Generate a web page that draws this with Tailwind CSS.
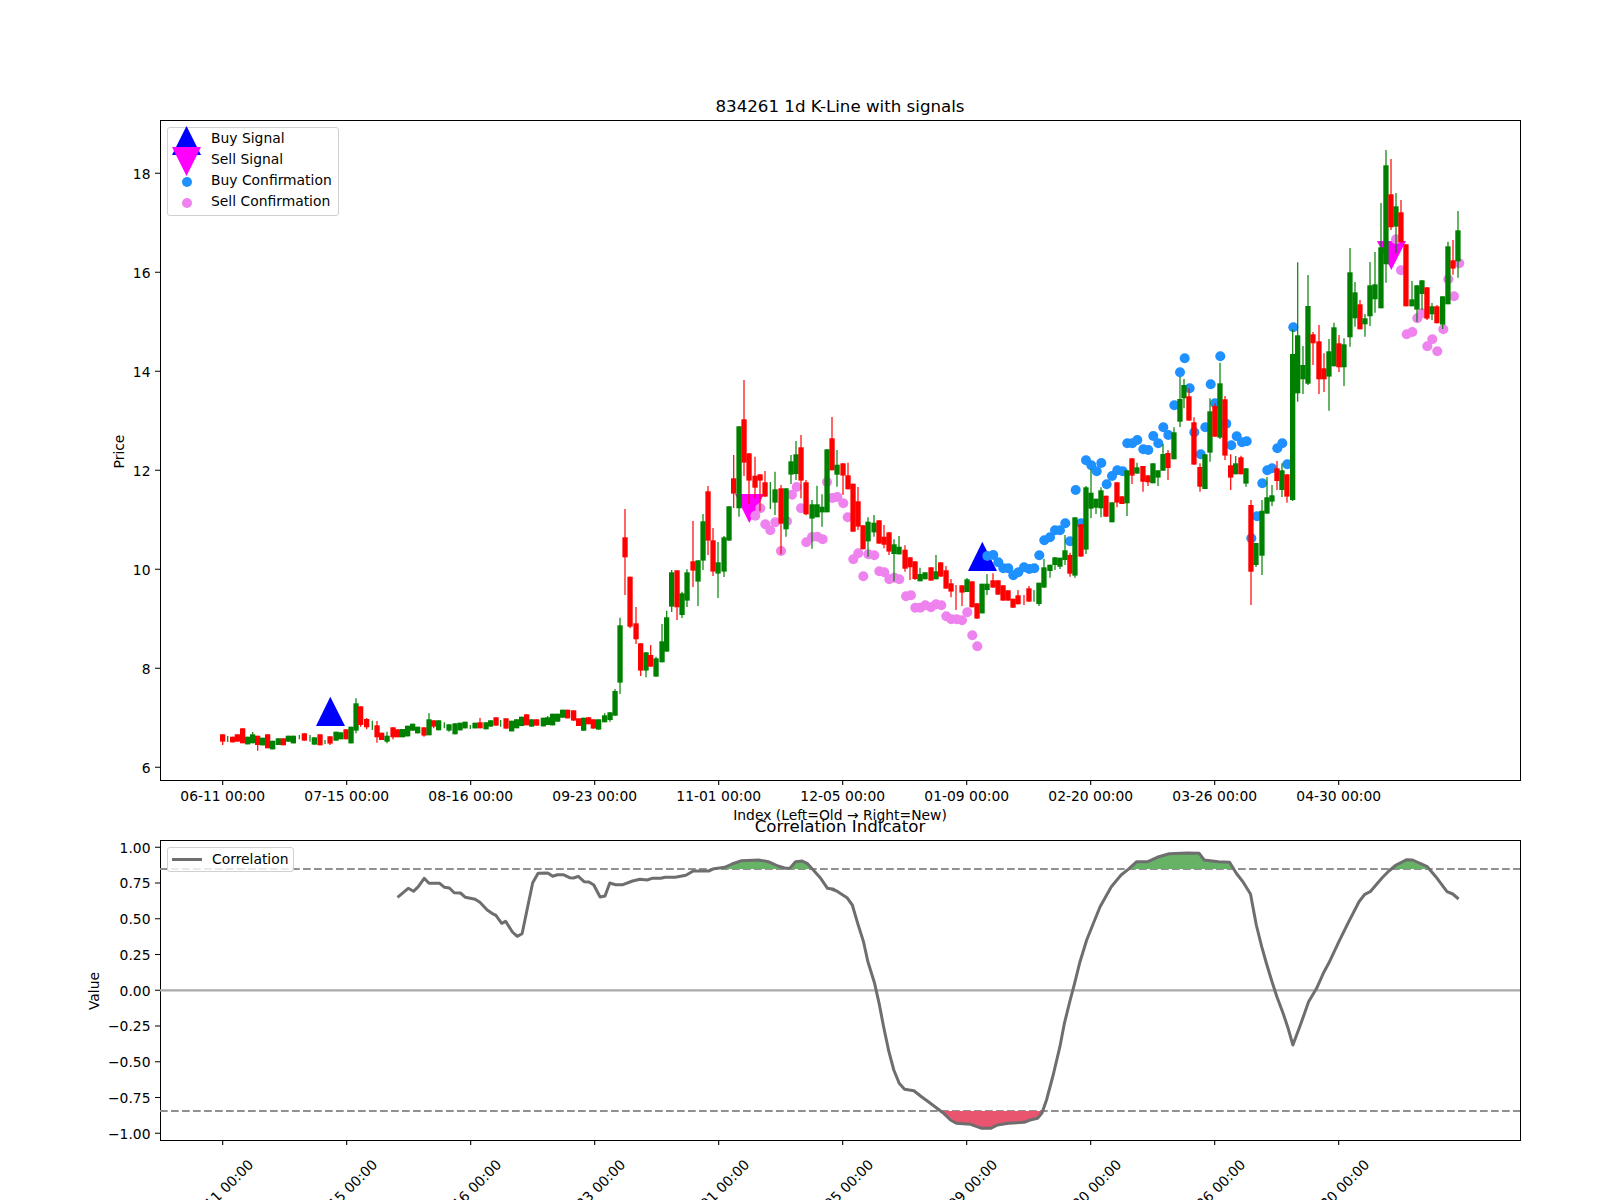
<!DOCTYPE html>
<html>
<head>
<meta charset="utf-8">
<script src="https://cdn.jsdelivr.net/npm/@tailwindcss/browser@4"></script>
</head>
<body class="bg-white">
<div class="relative w-[1600px] h-[1200px] overflow-hidden bg-white text-black font-['DejaVu_Sans',sans-serif] text-[13.89px] flex flex-col gap-[59px] pt-[120px] pl-[160px]">

  <section class="relative w-[1361px] h-[661px] border border-black">
    <svg class="absolute left-[-1px] top-[-1px] w-[1360px] h-[660px] overflow-visible" viewBox="160 120 1360 660" fill="black">
      <text x="840" y="112" text-anchor="middle" class="text-[16.67px]">834261 1d K-Line with signals</text>
      <g id="price-layer"></g>
      <path stroke="black" stroke-width="1.1" fill="none" d="M155 173.3h5M155 272.3h5M155 371.3h5M155 470.3h5M155 569.3h5M155 668.3h5M155 767.3h5M222.7 780v5M346.7 780v5M470.7 780v5M594.7 780v5M718.7 780v5M842.7 780v5M966.7 780v5M1090.7 780v5M1214.7 780v5M1338.7 780v5"/>
      <g text-anchor="end">
        <text x="150.5" y="178.5">18</text><text x="150.5" y="277.5">16</text><text x="150.5" y="376.5">14</text><text x="150.5" y="475.5">12</text><text x="150.5" y="574.5">10</text><text x="150.5" y="673.5">8</text><text x="150.5" y="772.5">6</text>
      </g>
      <g text-anchor="middle">
        <text x="222.7" y="801">06-11 00:00</text><text x="346.7" y="801">07-15 00:00</text><text x="470.7" y="801">08-16 00:00</text><text x="594.7" y="801">09-23 00:00</text><text x="718.7" y="801">11-01 00:00</text><text x="842.7" y="801">12-05 00:00</text><text x="966.7" y="801">01-09 00:00</text><text x="1090.7" y="801">02-20 00:00</text><text x="1214.7" y="801">03-26 00:00</text><text x="1338.7" y="801">04-30 00:00</text>
        <text x="840" y="820">Index (Left=Old → Right=New)</text>
        <text transform="rotate(-90 124 451.5)" x="124" y="451.5">Price</text>
      </g>
    </svg>
    <div class="absolute left-[6px] top-[6px] w-[172px] h-[89px] rounded-[3px] border border-[#d0d0d0] bg-white/80 flex flex-col">
      <div class="relative h-[21px] flex items-center pl-[43px]">
        <svg class="absolute left-[4px] top-[-2px] w-[29px] h-[29px] overflow-visible" viewBox="0 0 29 29"><polygon points="14.5,0 29,29 0,29" fill="#0000ff"/></svg>
        <span class="relative">Buy Signal</span>
      </div>
      <div class="relative h-[21px] flex items-center pl-[43px]">
        <svg class="absolute left-[4px] top-[-2px] w-[29px] h-[29px] overflow-visible" viewBox="0 0 29 29"><polygon points="0,0 29,0 14.5,29" fill="#ff00ff"/></svg>
        <span class="relative">Sell Signal</span>
      </div>
      <div class="relative h-[21px] flex items-center pl-[43px]">
        <span class="absolute left-[14px] top-[7px] w-[10px] h-[10px] rounded-full bg-[#1e90ff]"></span>
        <span class="relative">Buy Confirmation</span>
      </div>
      <div class="relative h-[21px] flex items-center pl-[43px]">
        <span class="absolute left-[14px] top-[7px] w-[10px] h-[10px] rounded-full bg-[#ee82ee]"></span>
        <span class="relative">Sell Confirmation</span>
      </div>
    </div>
  </section>

  <section class="relative w-[1361px] h-[301px] border border-black">
    <svg class="absolute left-[-1px] top-[-1px] w-[1360px] h-[300px] overflow-visible" viewBox="160 840 1360 300" fill="black">
      <defs>
        <clipPath id="above"><rect x="160" y="840" width="1360" height="29"/></clipPath>
        <clipPath id="below"><rect x="160" y="1111" width="1360" height="29"/></clipPath>
      </defs>
      <text x="840" y="832" text-anchor="middle" class="text-[16.67px]">Correlation Indicator</text>
      <path d="M160 990.3H1520" stroke="#aaaaaa" stroke-width="2.2" fill="none"/>
      <path d="M160 869H1520M160 1111H1520" stroke="#909090" stroke-width="2.2" stroke-dasharray="7.7 3.3" fill="none"/>
      <polygon id="fill-up" fill="#66b366" clip-path="url(#above)"/>
      <polygon id="fill-down" fill="#e9546f" clip-path="url(#below)"/>
      <polyline id="corr" fill="none" stroke="#6e6e6e" stroke-width="3" stroke-linejoin="round"/>
      <path stroke="black" stroke-width="1.1" fill="none" d="M155 847.3h5M155 883h5M155 918.8h5M155 954.5h5M155 990.3h5M155 1026h5M155 1061.8h5M155 1097.5h5M155 1133.3h5M222.7 1140v5M346.7 1140v5M470.7 1140v5M594.7 1140v5M718.7 1140v5M842.7 1140v5M966.7 1140v5M1090.7 1140v5M1214.7 1140v5M1338.7 1140v5"/>
      <g text-anchor="end">
        <text x="150.5" y="852.5">1.00</text><text x="150.5" y="888.2">0.75</text><text x="150.5" y="924">0.50</text><text x="150.5" y="959.7">0.25</text><text x="150.5" y="995.5">0.00</text><text x="150.5" y="1031.2">−0.25</text><text x="150.5" y="1067">−0.50</text><text x="150.5" y="1102.7">−0.75</text><text x="150.5" y="1138.5">−1.00</text>
      </g>
      <g text-anchor="middle">
        <text transform="rotate(-90 99 991)" x="99" y="991">Value</text>
        <text transform="rotate(-45 220.7 1192)" x="220.7" y="1197">06-11 00:00</text>
        <text transform="rotate(-45 344.7 1192)" x="344.7" y="1197">07-15 00:00</text>
        <text transform="rotate(-45 468.7 1192)" x="468.7" y="1197">08-16 00:00</text>
        <text transform="rotate(-45 592.7 1192)" x="592.7" y="1197">09-23 00:00</text>
        <text transform="rotate(-45 716.7 1192)" x="716.7" y="1197">11-01 00:00</text>
        <text transform="rotate(-45 840.7 1192)" x="840.7" y="1197">12-05 00:00</text>
        <text transform="rotate(-45 964.7 1192)" x="964.7" y="1197">01-09 00:00</text>
        <text transform="rotate(-45 1088.7 1192)" x="1088.7" y="1197">02-20 00:00</text>
        <text transform="rotate(-45 1212.7 1192)" x="1212.7" y="1197">03-26 00:00</text>
        <text transform="rotate(-45 1336.7 1192)" x="1336.7" y="1197">04-30 00:00</text>
      </g>
    </svg>
    <div class="absolute left-[6px] top-[6px] w-[127px] h-[25px] rounded-[3px] border border-[#d0d0d0] bg-white/80 flex items-center pl-[44px]">
      <span class="absolute left-[4px] top-[10px] w-[30px] h-[3px] bg-[#6e6e6e]"></span>
      <span class="relative">Correlation</span>
    </div>
  </section>
</div>

<script>
// Candles: [x, colour (0 green, 1 red), body top, body bottom, wick top, wick bottom] in crop coordinates
var G=0,R=1;
var segs=[
{ox:150,oy:480,s:3,d:[
[218,R,763,785,0,795],[233,G,0,0,768,786],[248,R,770,787],[262,R,763,785],[278,R,745,790],[293,G,770,793],[308,G,763,790,756],[323,R,767,795,0,812],[338,G,773,796],[353,R,763,805],[368,G,782,808],[385,G,775,795],[400,R,775,796],[415,G,767,785],[430,G,767,790],[448,G,0,0,765,778],[463,R,760,782],[480,G,0,0,765,785],[493,G,772,794],[510,R,763,796],[525,G,0,0,780,792],[540,R,769,791,0,795],[558,G,755,782],[572,G,757,778],[588,R,748,778],[603,G,740,790],[618,G,670,752,655,760],[632,R,679,735,0,740],[650,R,717,742,714,748],[667,G,0,0,722,750],[681,R,736,772,723,788],[695,R,758,780],[711,G,767,785,755,790],[729,R,742,772,0,778],[743,R,748,772],[758,G,747,772],[773,G,737,769],[788,G,731,752],[803,G,740,760],[822,R,742,767,0,770],[837,G,718,766,700],[851,R,721,740,0,745],[866,G,721,751],[883,G,0,0,727,745],[897,G,733,752,0,755],[915,G,730,763],[930,G,728,751],[945,G,725,745],[961,G,0,0,735,747],[975,G,728,745],[990,R,727,745,714],[1008,G,727,748],[1022,G,721,740],[1038,R,712,737],[1052,G,0,0,720,740],[1068,R,715,746],[1085,G,722,754],[1100,G,718,745],[1115,G,710,738],[1130,R,703,736],[1145,G,718,740],[1160,R,718,737],[1180,G,713,739],[1193,G,712,735,708],[1208,G,701,736],[1223,G,701,725],[1238,G,689,713],[1253,R,689,715],[1271,R,691,722],[1286,R,715,738],[1301,G,713,752],[1316,R,712,733],[1330,R,718,746],[1346,G,718,749],[1364,G,706,727,700],[1380,G,697,720,0,725],[1395,G,633,707,627]]},
{ox:600,oy:350,s:3,d:[
[60,G,826,998,803,1032],[75,R,562,622,477,735],[90,R,680,830,0,835],[108,R,820,868,771,882],[122,R,880,962,0,978],[138,G,907,962,0,982],[152,R,915,950,885],[168,G,925,980,920],[186,G,874,937,822],[200,G,802,905,782],[215,G,667,770,660,786],[231,R,661,772,0,810],[246,G,730,795,725,804],[261,G,667,752,658,771],[279,R,634,662,513,711],[294,G,631,695,0,768],[309,G,514,632,492,660],[324,R,424,572,408,615],[339,R,571,665,534,678],[354,G,637,671,576,744],[372,G,562,665,558,681],[387,G,469,572],[401,R,385,431,315,474],[417,G,229,475,0,500],[432,R,208,338,90,378],[447,R,310,392,0,462],[465,R,377,413,320,445],[480,R,373,392,0,484],[495,R,397,440,363],[511,G,0,0,396,477],[525,G,418,458,365,495],[543,R,415,521,405,613],[558,G,415,538,0,560],[573,G,334,374,315,402],[588,G,313,372,273,390],[603,R,292,392,255,445],[618,R,397,493,390,496],[636,G,463,506,450,596],[651,G,463,502,407],[666,G,470,487,433,530],[681,G,298,487],[696,R,265,361,201],[711,G,344,374,300,410],[729,R,340,377,0,435],[744,R,376,418,338],[759,R,401,545],[774,R,454,530,411,540],[789,R,526,598],[804,G,515,574,502,620],[822,G,518,547,495,560],[837,R,511,581],[852,R,560,584,525,595],[867,R,547,605,0,615],[882,G,583,612,568,694],[897,G,590,613,558],[915,R,599,656,586,665],[930,R,622,652,0,690],[945,R,634,687,0,690]]},
{ox:900,oy:400,s:3,d:[
[60,G,522,544,503],[75,G,517,538],[93,R,502,542],[108,G,514,538,465],[122,R,487,530],[138,R,511,566,498],[153,R,550,575,537,592],[168,R,0,0,555,630],[186,R,556,578,0,618],[201,G,538,576,534],[216,R,544,622],[231,R,610,656],[246,G,551,640],[261,G,551,570,522,585],[279,R,541,563,520],[294,R,541,584],[309,R,556,602],[324,R,571,602],[339,R,596,623],[354,R,586,613,570],[372,R,0,0,585,615],[387,R,565,605,558],[402,G,0,0,570,605],[417,G,548,612,0,618],[432,G,502,563,477],[450,G,494,513,0,533],[465,G,472,495,0,510],[480,G,473,500,0,507],[495,G,451,480,405,495],[510,R,465,521,458,530],[525,G,352,527,0,533],[543,R,373,470],[558,G,262,449,258,462],[573,G,278,326,207,355],[588,G,296,323,0,342],[603,G,271,325,262,352],[618,R,287,350],[636,G,307,367],[651,R,247,308,0,322],[666,R,289,312],[681,G,211,310,0,348],[696,R,175,227,0,252],[711,G,202,221,188],[729,R,198,245,0,275],[744,R,226,247,0,258],[759,G,190,250],[774,G,211,233,0,258],[789,G,162,212,132],[804,R,159,204,150,240],[822,G,97,178,82]]},
{ox:1180,oy:320,s:3,d:[
[0,G,237,305,171,321],[12,G,195,235,177,265],[27,R,229,302,205],[42,R,307,434,292],[60,R,441,500,430,515],[75,G,403,507],[90,G,274,398,235,425],[105,R,258,350,250],[120,G,190,353,128,357],[135,R,238,407,228,420],[152,R,436,473,403,510],[167,G,430,463,408],[183,R,412,463,407],[198,G,445,491,0,500],[213,R,555,755,540,855],[228,G,669,735,0,741],[246,G,572,707,540,765],[261,G,532,581,471],[276,G,526,545,495,558],[291,R,445,483,423,510],[306,G,451,510,430,531],[321,R,463,530,0,548],[338,G,102,540,28,543]]},
{ox:1180,oy:130,s:3,d:[
[353,G,616,790,397,815],[369,G,705,748,648,792],[384,G,528,761,435,765],[399,R,613,640,606,705],[417,R,634,748,585,792],[432,R,715,748,670,786],[447,G,664,740,627,842],[462,G,592,709,578],[477,R,640,712,615,726],[492,G,643,712,625,768],[510,G,427,622,354,650],[525,G,487,565,456,590],[540,R,523,598,510],[555,G,565,583,552,620],[570,G,466,559,396,588],[585,G,463,508,366,548],[603,G,352,535,219],[618,G,106,403,60,458],[633,R,193,292,87,300],[648,G,229,290,189,370],[663,R,247,337,210],[678,R,343,529],[696,G,508,529,453],[711,G,466,539,0,575],[726,G,451,492,0,540],[741,R,472,566,0,570],[756,G,529,553,519,570],[771,R,529,580,525],[788,G,499,584,0,597],[804,G,349,523,335],[819,R,391,416,330,434],[834,G,301,394,243,443]]}
];
var pink=[[600,350,[481,475,466,497,496,523,511,541,526,517,561,514,543,603,576,434,590,411,603,475,619,577,636,561,652,560,668,568,681,396,697,444,712,441,730,460,743,502,760,628,775,610,805,613,823,616,790,679,838,664,853,667,868,688,883,683,898,688]],
[900,400,[18,589,33,586,46,623,61,623,76,616,93,622,108,613,124,616,139,649,154,658,170,658,186,661,202,637,217,706,232,739]],
[1180,130,[648,328,663,421,805,448,838,400,822,499,712,565,727,550,790,598,680,613,697,606,757,628,742,649,772,664]]];
var blue=[[900,400,[262,468,280,465,295,487,310,505,325,505,340,526,355,517,372,502,388,507,403,505,418,466,433,421,450,412,465,391,480,391,496,370,510,424,527,270,543,370,558,181,574,196,590,214,604,189,620,253,636,228,652,211,668,214,682,130,697,130,712,120,730,148,745,150,760,108,775,130,790,82,805,105,823,16]],
[1180,320,[14,115,0,157,29,205,92,193,121,109,105,250,43,337,76,322,139,311,62,403,170,349,154,376,186,367,200,364,292,385,307,370,262,451,276,445,247,490,322,433,231,589,214,655,340,22]]];

var html='';
html+='<polygon points="330.3,696.7 345,726 316,726" fill="#0000ff"/>';
html+='<polygon points="735,494 764,494 749.3,523" fill="#ff00ff"/>';
html+='<polygon points="982.3,541.7 997,571 968,571" fill="#0000ff"/>';
html+='<polygon points="1377,241 1406,241 1391.3,270" fill="#ff00ff"/>';
function dots(set,col){set.forEach(function(p){for(var i=0;i<p[2].length;i+=2){
  html+='<circle cx="'+(p[0]+p[2][i]/3).toFixed(1)+'" cy="'+(p[1]+p[2][i+1]/3).toFixed(1)+'" r="5" fill="'+col+'"/>';
}});}
dots(blue,'#1e90ff');dots(pink,'#ee82ee');
segs.forEach(function(g){g.d.forEach(function(c){
  var x=g.ox+c[0]/g.s, col=c[1]?'#ff0000':'#008000';
  var t=c[2]?g.oy+c[2]/g.s:0, b=c[3]?g.oy+c[3]/g.s:0;
  var hi=c[4]?g.oy+c[4]/g.s:t, lo=c[5]?g.oy+c[5]/g.s:b;
  if(hi!==lo) html+='<line x1="'+x.toFixed(1)+'" x2="'+x.toFixed(1)+'" y1="'+hi.toFixed(1)+'" y2="'+lo.toFixed(1)+'" stroke="'+col+'" stroke-width="1.2"/>';
  if(t) html+='<rect x="'+(x-2.65).toFixed(1)+'" y="'+t.toFixed(1)+'" width="5.3" height="'+(b-t).toFixed(1)+'" fill="'+col+'"/>';
});});
document.getElementById('price-layer').innerHTML=html;

var z7=[655,262,665,250,677,235,688,244,698,230,710,205,720,220,742,220,752,232,762,234,772,248,785,249,795,262,815,268,825,277,840,300,850,310,858,316,870,340,878,334,892,366,902,379,912,371,925,280,934,218,945,190,965,189,975,199,985,194,997,194,1010,203,1018,204,1028,199,1040,215,1050,216,1060,225,1073,261,1083,258,1093,219,1105,224,1120,224,1140,213,1155,208,1170,210,1180,205,1198,205,1207,202,1228,202,1250,196,1265,183,1297,183,1308,176,1330,172,1345,162,1365,152,1400,150,1420,155,1440,168,1455,175,1465,174,1476,155,1490,153,1500,160,1515,184,1528,205,1542,235,1555,238];
var z8=[0,236,15,243,38,263,50,285,62,340,75,395,85,455,100,520,110,580,120,650,132,725,143,780,155,820,167,838,188,842,205,860,225,880,253,908,270,930,283,940,315,943,340,955,360,955,375,945,400,940,435,937,448,930,465,925,475,908,485,870,500,795,515,710,525,640,538,570,548,520,560,455,575,390,590,340,605,290,630,230,652,195,668,178,687,155,712,155,733,142,760,131,800,129,827,130,838,150,870,155,895,157,910,190,925,215,942,252,955,345,967,410,978,462,990,515,1001,560,1015,610,1025,650,1037,705,1055,640,1072,575,1090,535,1105,490,1117,460,1140,395,1160,340,1185,275,1198,253,1210,245,1237,203,1252,183,1268,165,1292,149,1305,150,1338,170,1360,205,1382,245,1395,252,1408,267];
var pts=[],i;
for(i=0;i<z7.length;i+=2)pts.push((80+z7[i]/2.063).toFixed(1)+','+(810+z7[i+1]/3).toFixed(1));
for(i=0;i<z8.length;i+=2)pts.push((830+z8[i]/2.24).toFixed(1)+','+(810+z8[i+1]/3).toFixed(1));
var line=pts.join(' ');
document.getElementById('corr').setAttribute('points',line);
var fx=pts[0].split(',')[0], lx=pts[pts.length-1].split(',')[0];
document.getElementById('fill-up').setAttribute('points',fx+',869 '+line+' '+lx+',869');
document.getElementById('fill-down').setAttribute('points',fx+',1111 '+line+' '+lx+',1111');
</script>
</body>
</html>
